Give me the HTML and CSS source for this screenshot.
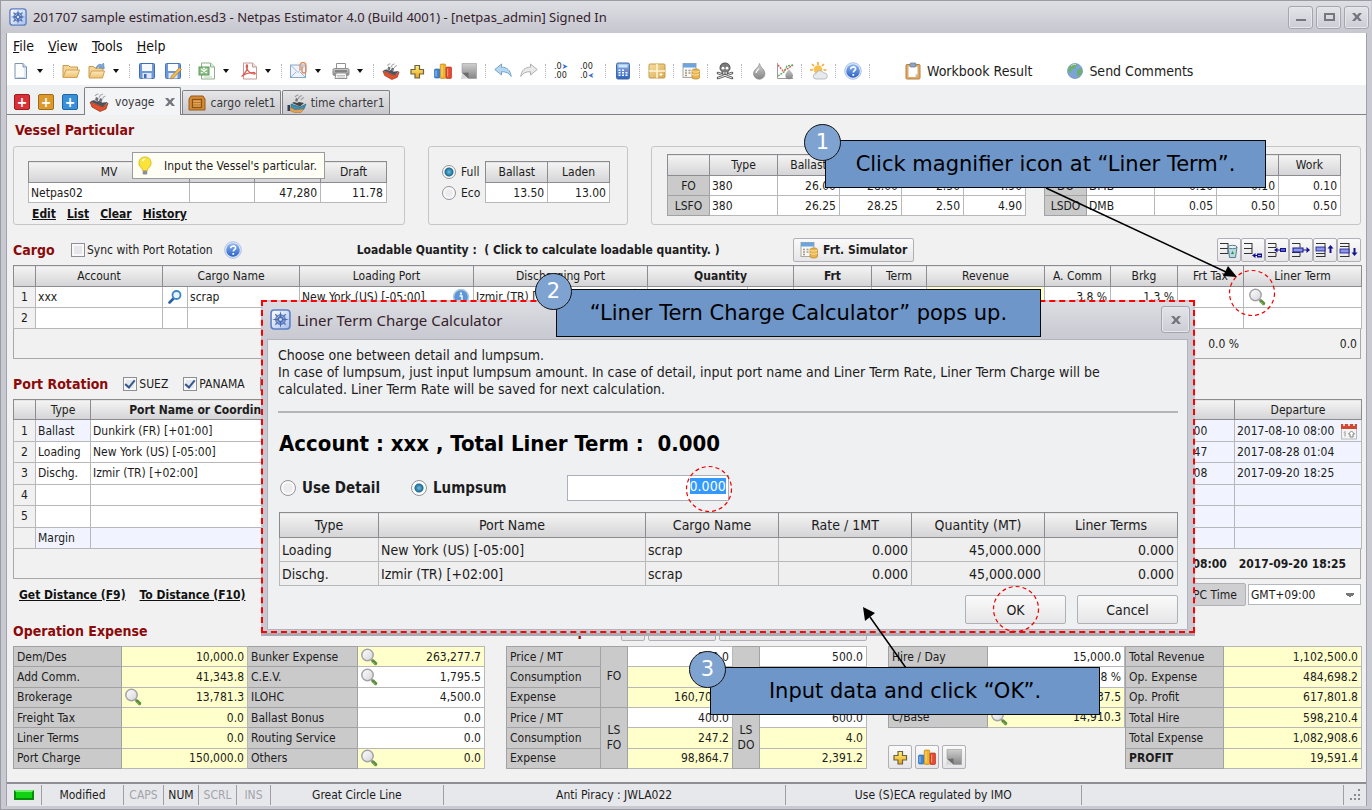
FILE: index.html
```html
<!DOCTYPE html>
<html lang="en">
<head>
    <meta charset="UTF-8">
    <meta name="viewport" content="width=device-width, initial-scale=1.0">
    <title>201707 sample estimation.esd3 - Netpas Estimator 4.0</title>
    <link rel="stylesheet" href="styles.css">
</head>
<body>
    <!-- icon sprite -->
    <svg class="sprite" xmlns="http://www.w3.org/2000/svg">
        <defs>
            <linearGradient id="gBlue" x1="0" y1="0" x2="0" y2="1"><stop offset="0" stop-color="#8fb8f0"/><stop offset="1" stop-color="#2a62c4"/></linearGradient>
            <linearGradient id="gGlass" x1="0" y1="0" x2="1" y2="1"><stop offset="0" stop-color="#ffffff"/><stop offset="1" stop-color="#d4d4d8"/></linearGradient>
            <linearGradient id="gGold" x1="0" y1="0" x2="0" y2="1"><stop offset="0" stop-color="#fff27a"/><stop offset="1" stop-color="#e8a21a"/></linearGradient>
            <linearGradient id="gFolder" x1="0" y1="0" x2="0" y2="1"><stop offset="0" stop-color="#fde9bf"/><stop offset="1" stop-color="#eec06e"/></linearGradient>
            <linearGradient id="gGrey" x1="0" y1="0" x2="0" y2="1"><stop offset="0" stop-color="#cfcfcf"/><stop offset="1" stop-color="#858585"/></linearGradient>
            <linearGradient id="gTan" x1="0" y1="0" x2="1" y2="1"><stop offset="0" stop-color="#f7dfa6"/><stop offset="1" stop-color="#d9a94e"/></linearGradient>
            <linearGradient id="gApp" x1="0" y1="0" x2="1" y2="1"><stop offset="0" stop-color="#ffffff"/><stop offset="1" stop-color="#a9c0ec"/></linearGradient>
        </defs>
        <symbol id="i-app" viewBox="0 0 20 20">
            <rect x="1" y="1" width="18" height="18" rx="3" fill="url(#gApp)" stroke="#5c7fc4" stroke-width="1.500"/>
            <circle cx="10" cy="10" r="4.500" fill="none" stroke="#5878b8" stroke-width="1.200"/>
            <path d="M10 2l1.500 6.500L18 10l-6.500 1.500L10 18l-1.500-6.500L2 10l6.500-1.500z" fill="#4a6cb0"/>
            <path d="M5 5l10 10M15 5L5 15" stroke="#5878b8" stroke-width="1.300"/>
            <circle cx="10" cy="10" r="1.300" fill="#dbe6fa"/>
        </symbol>
        <symbol id="i-new" viewBox="0 0 18 18">
            <path d="M3 1.500h8l3.500 3.500v11.500H3z" fill="#fbfdff" stroke="#7d93b4"/><path d="M11 1.500V5h3.500" fill="#d4e0f2" stroke="#7d93b4"/><path d="M13 6v9.500H4.500" fill="none" stroke="#c3d5ee"/>
        </symbol>
        <symbol id="i-open" viewBox="0 0 18 18">
            <path d="M1 15V3.500h5.500L8 5h7.500v3" fill="#f5d596" stroke="#c99a4a"/><path d="M1 15.500L4 8h13.500L15 15.500z" fill="url(#gFolder)" stroke="#cf9f52"/>
        </symbol>
        <symbol id="i-openfrom" viewBox="0 0 18 18">
            <path d="M1 15V4.500h4.500L7 6h8v3" fill="#f5d596" stroke="#c99a4a"/><path d="M1 16L3.500 9h13L14.500 16z" fill="url(#gFolder)" stroke="#cf9f52"/>
            <path d="M8 6.500C9 2.500 12 1.500 14 3l1.500-2 .8 5.500-5.300-.6L12.500 4.500C11 4 9.500 5 8 6.500z" fill="#7fa9d6" stroke="#4e7fb5" stroke-width=".6"/>
        </symbol>
        <symbol id="i-save" viewBox="0 0 18 18">
            <rect x="1.500" y="1.500" width="15" height="15" rx="1" fill="#6d99dc" stroke="#3f6db5"/><rect x="4" y="2" width="10" height="7" fill="#f5f9ff"/><rect x="4.500" y="11" width="9" height="5.500" fill="#dfe8f6"/><rect x="6" y="12" width="2.500" height="4" fill="#3f6db5"/>
        </symbol>
        <symbol id="i-saveas" viewBox="0 0 18 18">
            <rect x="1.500" y="1.500" width="15" height="15" rx="1" fill="#6d99dc" stroke="#4d76b8"/><rect x="4" y="2" width="10" height="7" fill="#fbfcff"/><rect x="4.500" y="11" width="9" height="5.500" fill="#dfe8f6"/><path d="M15.500 5.500l2 2-8 8.500-3 1 1-3z" fill="#f0bb55" stroke="#a87a28" stroke-width=".7"/>
        </symbol>
        <symbol id="i-xls" viewBox="0 0 18 18">
            <path d="M3.500 1h9l4 4v12h-13z" fill="#fff" stroke="#8fae8c"/><path d="M12.500 1v4h4" fill="#dcebd9" stroke="#8fae8c"/><rect x="1" y="5" width="10" height="8" fill="#8cc086" stroke="#5c9c58"/><path d="M3 7l6 4M9 7l-6 4M5 6.500h2" stroke="#fff" stroke-width="1.300"/><path d="M6 15h8" stroke="#b9d4b5"/>
        </symbol>
        <symbol id="i-pdf" viewBox="0 0 18 18">
            <path d="M3.500 1h9l4 4v12h-13z" fill="#fff" stroke="#c49a9a"/><path d="M12.500 1v4h4" fill="#f3dcdc" stroke="#c49a9a"/><path d="M1.500 14.500C5 12 8 7 7.500 3.500 7.300 2 5.800 3 6.500 5.500 7.500 9 10 11.500 14 12c2 .3 1.500-1.800-1.500-1.500C9 10.800 4 12.500 1.500 14.500z" fill="none" stroke="#dd5a50" stroke-width="1.200"/>
        </symbol>
        <symbol id="i-mail" viewBox="0 0 18 18">
            <rect x=".5" y="3" width="15" height="12.500" fill="#eef4fb" stroke="#8aa6c4"/><path d="M1 3.500l7 7 7-7M1 15l5-5M15 15l-5-5" fill="none" stroke="#9fb8d2"/><path d="M10 8V3.500a3 3 0 0 1 6 0V9a2 2 0 0 1-4 0V4" fill="none" stroke="#e08a5a" stroke-width="1.300"/>
        </symbol>
        <symbol id="i-print" viewBox="0 0 18 18">
            <path d="M4.500 1.500h9V7h-9z" fill="#fff" stroke="#909090"/><rect x="1" y="6.500" width="16" height="7" rx="1.500" fill="url(#gGrey)" stroke="#8d8d8d"/><path d="M4 11h10l1 5.500H3z" fill="#fafafa" stroke="#909090"/><path d="M5 13.500h8M5 15h8" stroke="#b4b4b4" stroke-width=".8"/><path d="M3 9h12" stroke="#555"/>
        </symbol>
        <symbol id="i-voyage" viewBox="0 0 20 20">
            <path d="M1 10l13 5 5-4-2 6-6 2.500L3 15z" fill="#e2512c" stroke="#8f2c14" stroke-width=".7"/><path d="M2 9.500l3-1 3 1.500 2.500-1L13 11l5-.5-4 4z" fill="#50545c" stroke="#34363c" stroke-width=".6"/><path d="M6 8l1-3 2.500 1-.8 3.500zM10 9l1-3 2.500 1-.8 3z" fill="#6c7078"/><path d="M6 4c1-1.500 2-2 3.500-2M10 5.500c1-2.500 2-3 4-3.500M13.500 6.500c.8-1.500 1.500-2 3-2.500" fill="none" stroke="#a8a8a8" stroke-width="1.200"/>
        </symbol>
        <symbol id="i-plus" viewBox="0 0 18 18">
            <path d="M7 3.500h4.500v4h4V12h-4v4H7v-4H3V7.500h4z" fill="url(#gGold)" stroke="#6d6242" stroke-width="1.200"/>
        </symbol>
        <symbol id="i-bars" viewBox="0 0 18 18">
            <rect x=".5" y="7" width="5.500" height="9" rx="1" fill="#3f87d6" stroke="#1d5ea8" stroke-width=".6"/><rect x="6.200" y="2" width="5.500" height="14.500" rx="1" fill="#f0b226" stroke="#b87c10" stroke-width=".6"/><rect x="12" y="5" width="5.500" height="11.500" rx="1" fill="#e5482e" stroke="#a52a16" stroke-width=".6"/><path d="M2 8.500v6M8 3.500v11M13.700 6.500v8" stroke="#fff" stroke-opacity=".5"/>
        </symbol>
        <symbol id="i-note" viewBox="0 0 18 18">
            <path d="M2 1.500h14.500v15H8.500L2 11z" fill="url(#gGrey)" stroke="#999" stroke-width=".6"/><path d="M2 11l6.500 5.500V10.500z" fill="#6d6d6d"/><path d="M1 17l7-.5L2 11z" fill="#d6d6d6"/>
        </symbol>
        <symbol id="i-undo" viewBox="0 0 18 18">
            <path d="M.8 7.500L7.500 2v3.200c5.500 0 9 3 9.700 9.300-2.200-3.500-5-4.800-9.700-4.800V13z" fill="#b7d7f0" stroke="#6b9cc6" stroke-width=".9"/>
        </symbol>
        <symbol id="i-redo" viewBox="0 0 18 18">
            <path d="M17.200 7.500L10.500 2v3.200C5 5.200 1.500 8.200.8 14.500 3 11 5.800 9.700 10.500 9.700V13z" fill="#e9e9e9" stroke="#a8a8a8" stroke-width=".9"/>
        </symbol>
        <symbol id="i-calc" viewBox="0 0 18 18">
            <rect x="2.500" y="1" width="13" height="16" rx="1.500" fill="url(#gBlue)" stroke="#47699f"/><rect x="4.500" y="2.500" width="9" height="3" fill="#cfe3fa"/><g fill="#fff"><path d="M4.500 7.500h2v1.500h-2zM8 7.500h2v1.500H8zM4.500 10h2v1.500h-2zM8 10h2v1.500H8zM4.500 12.500h2V14h-2zM8 12.500h2V14H8zM11.500 10h2v1.500h-2zM11.500 12.500h2V14h-2z"/></g><path d="M11.500 7.500h2v1.500h-2z" fill="#e86a5a"/>
        </symbol>
        <symbol id="i-grid" viewBox="0 0 18 18">
            <rect x="1" y="2" width="16" height="14" rx="1" fill="url(#gTan)" stroke="#c39a4c"/><path d="M9 2v14M1 9h16" stroke="#fff5d8" stroke-width="1.500"/><path d="M13 11v3M11.500 12.500h3" stroke="#fff"/>
        </symbol>
        <symbol id="i-sim" viewBox="0 0 18 18">
            <rect x="1" y="1.500" width="13" height="14" fill="#f7f7f4" stroke="#a9a9a0"/><rect x="1" y="1.500" width="13" height="4" fill="#6ba4df"/><path d="M3 8.500h2M6.500 8.500h2M3 11h2M6.500 11h2M3 13.500h2" stroke="#a7988a" stroke-width="1.500"/><path d="M10 8.500c0-2 7.500-2 7.500 0v7c0 2-7.500 2-7.500 0z" fill="#e9b44a" stroke="#b6802a" stroke-width=".7"/><path d="M10 9c1 1.500 6.500 1.500 7.500 0M10 12c1 1.500 6.500 1.500 7.500 0" fill="none" stroke="#fbe3a6"/>
        </symbol>
        <symbol id="i-skull" viewBox="0 0 18 18">
            <path d="M2 11l14 5M16 11l-14 5" stroke="#5c5c5c" stroke-width="2.600" stroke-linecap="round"/><path d="M2 11l14 5M16 11l-14 5" stroke="#e4e4e4" stroke-width="1"/><path d="M9 1c3.500 0 5 2.300 5 5 0 2-1 2.800-2 3.300V12H6V9.300C5 8.800 4 8 4 6c0-2.700 1.500-5 5-5z" fill="#7a7a7a" stroke="#555"/><circle cx="7" cy="6.200" r="1.400" fill="#fff"/><circle cx="11" cy="6.200" r="1.400" fill="#fff"/><path d="M7.500 10v2M9 10v2M10.500 10v2" stroke="#ddd" stroke-width=".8"/>
        </symbol>
        <symbol id="i-drop" viewBox="0 0 18 18">
            <path d="M9.500 1.500c.5 4 5.500 6 5.500 10a5.500 5.500 0 0 1-11.500 0C3.500 7.500 8.500 6 9.500 1.500z" fill="url(#gGrey)" stroke="#8c8c8c" stroke-width=".7"/><path d="M6 11c0-2 2-3 3-4.500" fill="none" stroke="#fff" stroke-width="1.200"/>
        </symbol>
        <symbol id="i-trend" viewBox="0 0 18 18">
            <path d="M1.500 1v15.500H17" fill="none" stroke="#9c9c9c"/><path d="M2 3l5 6 4-2 6-4" fill="none" stroke="#dd5a4c" stroke-width="1.400" stroke-dasharray="2 1"/><path d="M2 14l6-4 3-6 6-1" fill="none" stroke="#5fae62" stroke-width="1.400" stroke-dasharray="2 1"/><path d="M13 6.500c.5 2.500 4 4 4 7a3.800 3.800 0 0 1-7.600 0C9.400 10.500 12.500 9 13 6.500z" fill="url(#gGrey)"/>
        </symbol>
        <symbol id="i-sun" viewBox="0 0 18 18">
            <path d="M8 0v3M2 2l2 2M14 2l-2 2M0 8h3M16.500 8h-3" stroke="#f0a83c" stroke-width="1.600"/><circle cx="8" cy="7.500" r="4.300" fill="#f8c04c"/><path d="M6 17a2.700 2.700 0 0 1 0-5.400 4 4 0 0 1 7.500-.6 3 3 0 0 1 1.500 6z" fill="#e8ebee" stroke="#a9aeb4" stroke-width=".8"/>
        </symbol>
        <symbol id="i-help" viewBox="0 0 18 18">
            <circle cx="9" cy="9" r="8.300" fill="#dfe9fa" stroke="#9db4dc" stroke-width=".8"/><circle cx="9" cy="9" r="6.800" fill="url(#gBlue)"/><path d="M6.700 7.200c0-3 4.900-3 4.900-.2 0 1.700-2.300 1.800-2.300 3.600" fill="none" stroke="#fff" stroke-width="1.600"/><rect x="8.400" y="12" width="1.800" height="1.800" fill="#fff"/>
        </symbol>
        <symbol id="i-info" viewBox="0 0 18 18">
            <circle cx="9" cy="9" r="7.500" fill="#5b96d6" stroke="#b4c8dc" stroke-width="1.500"/><rect x="8" y="4.500" width="2" height="2" fill="#fff"/><path d="M7.500 8H10v5M7 13.200h4.500" fill="none" stroke="#fff" stroke-width="1.400"/>
        </symbol>
        <symbol id="i-clip" viewBox="0 0 18 18">
            <rect x="2" y="2.500" width="14" height="14.500" rx="1" fill="#e0a968" stroke="#b8803f"/><path d="M4.500 4.500h9V12l-2 3h-7z" fill="#fcfdff"/><path d="M13.500 12h-2v3z" fill="#c6cfde"/><rect x="6" y="1" width="6" height="4" rx="1" fill="#8ea4c4" stroke="#66799a" stroke-width=".7"/>
        </symbol>
        <symbol id="i-globe" viewBox="0 0 18 18">
            <circle cx="9" cy="9" r="7.500" fill="#7ba5d6" stroke="#7c94b8" stroke-width=".8"/><path d="M4 3.500C7 1.500 10 2 11 3L9.500 6 6 7.500 4.500 11 2 8.500zM11 8l4.500-1.500.8 3.500-3 4.500-2.300-1z" fill="#6eb070"/><path d="M5 4c1.500-1.500 3-1.800 5-1.500" stroke="#fff" stroke-opacity=".6" fill="none"/>
        </symbol>
        <symbol id="i-lens" viewBox="0 0 18 18">
            <path d="M13 13l2.500 2.500" stroke="#5a8f38" stroke-width="3.400" stroke-linecap="round"/><path d="M12.500 14l2.500 2.500" stroke="#a3cf7c" stroke-width="1"/><path d="M11 11l2 2" stroke="#7a7a7a" stroke-width="1.500"/><circle cx="7.500" cy="7" r="5.700" fill="url(#gGlass)" stroke="#a4a4a8" stroke-width="1.500"/>
        </symbol>
        <symbol id="i-find" viewBox="0 0 18 18">
            <path d="M8 10L3.500 14.500" stroke="#2a5da8" stroke-width="2.600" stroke-linecap="round"/><circle cx="10.500" cy="7" r="4" fill="#eaf4fd" stroke="#3c85c8" stroke-width="1.800"/>
        </symbol>
        <symbol id="i-crate" viewBox="0 0 20 20">
            <path d="M4 3h12l2 3v11H2V6z" fill="#d68b32" stroke="#94581a"/><rect x="5.500" y="6.500" width="9" height="8" fill="#e2a355" stroke="#8c5216" stroke-width="1.300"/><path d="M6 9.500h8M6 12h8" stroke="#b87428"/>
        </symbol>
        <symbol id="i-charter" viewBox="0 0 20 20">
            <path d="M4 11l9 3 6-3-2 5-6 2.500-7-2z" fill="#3a8fb0" stroke="#275f78" stroke-width=".6"/><path d="M3 14l5 3 9-1-3 3.500-6 .2-5-2z" fill="#e5a258" stroke="#a8692a" stroke-width=".5"/><path d="M5 10l2-1 3 1 2-1 5 1-4 3.500z" fill="#444"/><path d="M8 8l1-3 2 .8-.6 3z" fill="#6c7078"/><path d="M8 4c1-1.500 2-2 3.500-2M11 6c1-2.500 2-3 4-3.500M14 7c.8-1.500 1.500-2 3-2.500" fill="none" stroke="#999" stroke-width="1.200"/><rect x=".5" y="12" width="2.500" height="6" fill="#2e3f5e"/>
        </symbol>
        <symbol id="i-bulb" viewBox="0 0 18 20">
            <path d="M9 1a6 6 0 0 1 3.500 11c-.8.700-1 1.500-1 2.500h-5c0-1-.2-1.800-1-2.500A6 6 0 0 1 9 1z" fill="#fae43c" stroke="#d4b21e" stroke-width=".8"/><path d="M6.500 5c.5-1.500 1.500-2 2.500-2" fill="none" stroke="#fff" stroke-width="1.500"/><rect x="6.700" y="14.800" width="4.600" height="3.700" rx="1" fill="#8b8f96"/>
        </symbol>
        <symbol id="i-calendar" viewBox="0 0 18 18">
            <rect x="1.500" y="3" width="15" height="14" fill="#f3f3f3" stroke="#b8b8b8"/><rect x="1" y="2" width="16" height="5" fill="#cf4a34"/><path d="M4 1v3M9 1v3M14 1v3" stroke="#fff" stroke-width="1.500"/><path d="M5 9.500v5M4 10.500l1-1" fill="none" stroke="#999"/><path d="M11.500 9l3 3h-1.500v3h-3v-3H8.500z" fill="#fff" stroke="#777" stroke-width=".9"/>
        </symbol>
        <symbol id="i-rowdel" viewBox="0 0 20 18">
            <path d="M1 2.500h8M1 7.500h8M1 12.500h8M9 2v11" stroke="#333" fill="none"/><path d="M9 6h9l-1.500 10.500h-6z" fill="#b9d8e2" stroke="#587e90"/><ellipse cx="13.500" cy="6" rx="4.500" ry="1.700" fill="#e9f4f7" stroke="#587e90"/><path d="M12 13l1.500-3 1.500 3z" fill="#189a3c"/>
        </symbol>
        <symbol id="i-rowadd" viewBox="0 0 20 18">
            <path d="M1 2.500h8M1 7.500h8M1 12.500h8M9 2v11" stroke="#333" fill="none"/><path d="M9 14.500l3.500-2.500v2H14v-1.500h5v4h-5V15h-1.500v2z" fill="#14148c"/><path d="M15 14h3v1h-3z" fill="#aab0ec"/>
        </symbol>
        <symbol id="i-rowins" viewBox="0 0 20 18">
            <path d="M1 2.500h8v4M1 6.500h8M1 11.500h8v4M1 15.500h8" stroke="#333" fill="none"/><path d="M7 9l3.500-2.500v2H13V7h6v4h-6V9.500h-2.500v2z" fill="#14148c"/><path d="M14 8.500h4v1h-4z" fill="#aab0ec"/>
        </symbol>
        <symbol id="i-rowout" viewBox="0 0 20 18">
            <path d="M1 2.500h8v4M1 11.500h8v4M1 15.500h8" stroke="#333" fill="none"/><rect x="2" y="7" width="10" height="4" fill="#8c96ea" stroke="#14148c"/><path d="M19 9l-3.500-3v2.500H12v1h3.500V12z" fill="#14148c"/>
        </symbol>
        <symbol id="i-rowup" viewBox="0 0 20 18">
            <path d="M1 2.500h9M1 15.500h9M10 2v14M1 12.500h9" stroke="#333" fill="none"/><rect x="1" y="6" width="9" height="4" fill="#8c96ea" stroke="#14148c" stroke-width=".8"/><path d="M15.500 4l3 3.500h-2V12h-2V7.500h-2z" fill="#14148c"/>
        </symbol>
        <symbol id="i-rowdown" viewBox="0 0 20 18">
            <path d="M1 2.500h9M1 15.500h9M10 2v14M1 5.500h9" stroke="#333" fill="none"/><rect x="1" y="8" width="9" height="4" fill="#8c96ea" stroke="#14148c" stroke-width=".8"/><path d="M15.500 15l3-3.500h-2V7h-2v4.500h-2z" fill="#14148c"/>
        </symbol>
        <symbol id="i-close" viewBox="0 0 12 12"><path d="M1 2h3l2 2.300L8 2h3L7.700 6 11 10H8L6 7.700 4 10H1l3.300-4z" fill="#767680"/></symbol>
    </svg>

    <div class="window">
        <header class="titlebar">
            <svg class="app-icon"><use href="#i-app"/></svg>
            <h1>201707 sample estimation.esd3 - Netpas Estimator 4.0 (Build 4001) - [netpas_admin] Signed In</h1>
            <div class="window-buttons">
                <button type="button" aria-label="Minimize"><svg viewBox="0 0 12 12"><path d="M1 8h10v2H1z" fill="#767680"/></svg></button>
                <button type="button" aria-label="Maximize"><svg viewBox="0 0 12 12"><path d="M2 3h9v6H2z" fill="none" stroke="#767680" stroke-width="2"/></svg></button>
                <button type="button" aria-label="Close"><svg><use href="#i-close"/></svg></button>
            </div>
        </header>

        <div class="client">
            <nav class="menubar">
                <a href="#"><u>F</u>ile</a>
                <a href="#"><u>V</u>iew</a>
                <a href="#"><u>T</u>ools</a>
                <a href="#"><u>H</u>elp</a>
            </nav>

            <div class="toolbar">
                <button type="button" class="tool" aria-label="New"><svg><use href="#i-new"/></svg></button>
                <button type="button" class="drop" aria-label="New options"></button>
                <span class="sep"></span>
                <button type="button" class="tool" aria-label="Open"><svg><use href="#i-open"/></svg></button>
                <button type="button" class="tool" aria-label="Open from"><svg><use href="#i-openfrom"/></svg></button>
                <button type="button" class="drop" aria-label="Open options"></button>
                <span class="sep"></span>
                <button type="button" class="tool" aria-label="Save"><svg><use href="#i-save"/></svg></button>
                <button type="button" class="tool" aria-label="Save as"><svg><use href="#i-saveas"/></svg></button>
                <span class="sep"></span>
                <button type="button" class="tool" aria-label="Excel"><svg><use href="#i-xls"/></svg></button>
                <button type="button" class="drop" aria-label="Excel options"></button>
                <button type="button" class="tool" aria-label="PDF"><svg><use href="#i-pdf"/></svg></button>
                <button type="button" class="drop" aria-label="PDF options"></button>
                <span class="sep"></span>
                <button type="button" class="tool" aria-label="Mail"><svg><use href="#i-mail"/></svg></button>
                <button type="button" class="drop" aria-label="Mail options"></button>
                <button type="button" class="tool" aria-label="Print"><svg><use href="#i-print"/></svg></button>
                <button type="button" class="drop" aria-label="Print options"></button>
                <span class="sep"></span>
                <button type="button" class="tool" aria-label="Voyage"><svg><use href="#i-voyage"/></svg></button>
                <button type="button" class="tool" aria-label="Add"><svg><use href="#i-plus"/></svg></button>
                <button type="button" class="tool" aria-label="Chart"><svg><use href="#i-bars"/></svg></button>
                <button type="button" class="tool" aria-label="Note"><svg><use href="#i-note"/></svg></button>
                <span class="sep"></span>
                <button type="button" class="tool" aria-label="Undo"><svg><use href="#i-undo"/></svg></button>
                <button type="button" class="tool" aria-label="Redo"><svg><use href="#i-redo"/></svg></button>
                <span class="sep"></span>
                <button type="button" class="tool decimal" aria-label="Less decimals"><span>.0<i>&#10148;</i></span><span>.00</span></button>
                <button type="button" class="tool decimal" aria-label="More decimals"><span>.00</span><span>.0<i class="back">&#10148;</i></span></button>
                <span class="sep"></span>
                <button type="button" class="tool" aria-label="Calculator"><svg><use href="#i-calc"/></svg></button>
                <span class="sep"></span>
                <button type="button" class="tool" aria-label="Layout"><svg><use href="#i-grid"/></svg></button>
                <span class="sep"></span>
                <button type="button" class="tool" aria-label="Simulator"><svg><use href="#i-sim"/></svg></button>
                <span class="sep"></span>
                <button type="button" class="tool" aria-label="Piracy"><svg><use href="#i-skull"/></svg></button>
                <span class="sep"></span>
                <button type="button" class="tool" aria-label="Bunker"><svg><use href="#i-drop"/></svg></button>
                <button type="button" class="tool" aria-label="Bunker trend"><svg><use href="#i-trend"/></svg></button>
                <span class="sep"></span>
                <button type="button" class="tool" aria-label="Weather"><svg><use href="#i-sun"/></svg></button>
                <span class="sep"></span>
                <button type="button" class="tool" aria-label="Help"><svg><use href="#i-help"/></svg></button>
                <span class="sep"></span>
                <button type="button" class="tool-text"><svg><use href="#i-clip"/></svg>Workbook Result</button>
                <button type="button" class="tool-text"><svg><use href="#i-globe"/></svg>Send Comments</button>
            </div>

            <div class="tabs">
                <button type="button" class="add add-red" aria-label="Add voyage">+</button>
                <button type="button" class="add add-gold" aria-label="Add cargo relet">+</button>
                <button type="button" class="add add-blue" aria-label="Add time charter">+</button>
                <button type="button" class="tab active"><svg><use href="#i-voyage"/></svg>voyage<svg class="tab-close"><use href="#i-close"/></svg></button>
                <button type="button" class="tab"><svg><use href="#i-crate"/></svg>cargo relet1</button>
                <button type="button" class="tab"><svg><use href="#i-charter"/></svg>time charter1</button>
            </div>

            <main class="content">
                <h2 class="vessel-title">Vessel Particular</h2>
                <div class="panels">
                    <section class="panel panel-vessel">
                        <table class="grid vessel">
                            <colgroup><col><col><col><col></colgroup>
                            <tr><th>MV</th><th>Type</th><th>DWT</th><th>Draft</th></tr>
                            <tr><td>Netpas02</td><td></td><td class="num">47,280</td><td class="num">11.78</td></tr>
                        </table>
                        <div class="links">
                            <a href="#">Edit</a><a href="#">List</a><a href="#">Clear</a><a href="#">History</a>
                        </div>
                        <div class="tip"><svg><use href="#i-bulb"/></svg>Input the Vessel's particular.</div>
                    </section>
                    <section class="panel panel-speed">
                        <div class="speed-mode">
                            <label><input type="radio" name="speed" checked>Full</label>
                            <label><input type="radio" name="speed">Eco</label>
                        </div>
                        <table class="grid">
                            <tr><th>Ballast</th><th>Laden</th></tr>
                            <tr><td class="num">13.50</td><td class="num">13.00</td></tr>
                        </table>
                    </section>
                    <section class="panel panel-fuel">
                        <table class="grid fuel fuel-a">
                            <colgroup><col><col><col><col><col><col></colgroup>
                            <tr><th></th><th>Type</th><th>Ballast</th><th>Laden</th><th>Idle</th><th>Work</th></tr>
                            <tr><td class="lab">FO</td><td>380</td><td class="num">26.00</td><td class="num">28.00</td><td class="num">2.50</td><td class="num">4.90</td></tr>
                            <tr><td class="lab">LSFO</td><td>380</td><td class="num">26.25</td><td class="num">28.25</td><td class="num">2.50</td><td class="num">4.90</td></tr>
                        </table>
                        <table class="grid fuel fuel-b">
                            <colgroup><col><col><col><col><col></colgroup>
                            <tr><th></th><th>Type</th><th>Sea</th><th>Idle</th><th>Work</th></tr>
                            <tr><td class="lab">DO</td><td>DMB</td><td class="num">0.10</td><td class="num">0.10</td><td class="num">0.10</td></tr>
                            <tr><td class="lab">LSDO</td><td>DMB</td><td class="num">0.05</td><td class="num">0.50</td><td class="num">0.50</td></tr>
                        </table>
                    </section>
                </div>

                <div class="section-head cargo-head">
                    <h2>Cargo</h2>
                    <label class="check"><input type="checkbox">Sync with Port Rotation</label>
                    <button type="button" class="plain" aria-label="Help"><svg><use href="#i-help"/></svg></button>
                    <strong>Loadable Quantity : &nbsp;( Click to calculate loadable quantity. )</strong>
                    <button type="button" class="push simulator"><svg><use href="#i-sim"/></svg>Frt. Simulator</button>
                    <div class="row-tools">
                        <button type="button" class="push" aria-label="Delete row"><svg><use href="#i-rowdel"/></svg></button>
                        <button type="button" class="push" aria-label="Add row"><svg><use href="#i-rowadd"/></svg></button>
                        <button type="button" class="push" aria-label="Insert row"><svg><use href="#i-rowins"/></svg></button>
                        <button type="button" class="push" aria-label="Copy row"><svg><use href="#i-rowout"/></svg></button>
                        <button type="button" class="push" aria-label="Move up"><svg><use href="#i-rowup"/></svg></button>
                        <button type="button" class="push" aria-label="Move down"><svg><use href="#i-rowdown"/></svg></button>
                    </div>
                </div>
                <table class="grid cargo">
                    <colgroup><col><col><col><col><col><col><col><col><col><col><col><col><col><col><col></colgroup>
                    <tr><th></th><th>Account</th><th colspan="2">Cargo Name</th><th>Loading Port</th><th>Discharging Port</th><th colspan="2" class="strong">Quantity</th><th class="strong">Frt</th><th>Term</th><th>Revenue</th><th>A. Comm</th><th>Brkg</th><th>Frt Tax</th><th>Liner Term</th></tr>
                    <tr>
                        <td class="idx">1</td><td>xxx</td>
                        <td class="icon-cell"><button type="button" class="plain" aria-label="Find cargo"><svg><use href="#i-find"/></svg></button></td>
                        <td>scrap</td>
                        <td><div class="with-icon">New York (US) [-05:00]<svg><use href="#i-info"/></svg></div></td>
                        <td><div class="with-icon">Izmir (TR) [+02:00]<svg><use href="#i-info"/></svg></div></td>
                        <td class="num">45,000</td><td>MT</td><td class="num">24.50</td><td>FIOST</td><td class="num calc">1,102,500.0</td>
                        <td class="num">3.8 %</td><td class="num">1.3 %</td><td></td>
                        <td><button type="button" class="plain lens" aria-label="Liner term"><svg><use href="#i-lens"/></svg></button></td>
                    </tr>
                    <tr><td class="idx">2</td><td></td><td></td><td></td><td></td><td></td><td></td><td></td><td></td><td></td><td class="calc"></td><td></td><td></td><td></td><td></td></tr>
                </table>
                <div class="grid-foot cargo-foot"><span>0.0 %</span><span class="foot-liner">0.0</span></div>

                <div class="section-head rotation-head">
                    <h2>Port Rotation</h2>
                    <label class="check"><input type="checkbox" checked>SUEZ</label>
                    <label class="check"><input type="checkbox" checked>PANAMA</label>
                    <label class="check"><input type="checkbox">KIEL</label>
                </div>
                <table class="grid rotation">
                    <colgroup><col><col><col><col><col><col></colgroup>
                    <tr><th></th><th>Type</th><th class="strong">Port Name or Coordinate</th><th></th><th>Arrival</th><th>Departure</th></tr>
                    <tr><td class="idx">1</td><td class="auto">Ballast</td><td>Dunkirk (FR) [+01:00]</td><td></td><td class="auto">2017-08-10 08:00</td><td class="auto"><div class="with-icon">2017-08-10 08:00<svg><use href="#i-calendar"/></svg></div></td></tr>
                    <tr><td class="idx">2</td><td>Loading</td><td>New York (US) [-05:00]</td><td></td><td class="auto">2017-08-23 22:47</td><td class="auto">2017-08-28 01:04</td></tr>
                    <tr><td class="idx">3</td><td>Dischg.</td><td>Izmir (TR) [+02:00]</td><td></td><td class="auto">2017-09-14 07:08</td><td class="auto">2017-09-20 18:25</td></tr>
                    <tr><td class="idx">4</td><td></td><td></td><td></td><td class="auto"></td><td class="auto"></td></tr>
                    <tr><td class="idx">5</td><td></td><td></td><td></td><td class="auto"></td><td class="auto"></td></tr>
                    <tr><td class="idx"></td><td class="auto">Margin</td><td class="auto"></td><td class="auto"></td><td class="auto"></td><td class="auto"></td></tr>
                </table>
                <div class="grid-foot rotation-foot"><strong>2017-08-10 08:00</strong><strong>2017-09-20 18:25</strong></div>

                <div class="distance-bar">
                    <a href="#">Get Distance (F9)</a>
                    <a href="#">To Distance (F10)</a>
                    <button type="button" class="push pc-time">PC Time</button>
                    <select aria-label="Time zone"><option>GMT+09:00</option></select>
                </div>

                <div class="results">
                    <section>
                        <div class="block-head"><h2>Operation Expense</h2></div>
                        <table class="grid sums opex">
                            <colgroup><col><col><col><col></colgroup>
                            <tr><td class="lab">Dem/Des</td><td class="num calc">10,000.0</td><td class="lab">Bunker Expense</td><td class="calc"><div class="lookup"><button type="button" class="plain" aria-label="Bunker expense detail"><svg><use href="#i-lens"/></svg></button>263,277.7</div></td></tr>
                            <tr><td class="lab">Add Comm.</td><td class="num calc">41,343.8</td><td class="lab">C.E.V.</td><td><div class="lookup"><button type="button" class="plain" aria-label="C.E.V. detail"><svg><use href="#i-lens"/></svg></button>1,795.5</div></td></tr>
                            <tr><td class="lab">Brokerage</td><td class="calc"><div class="lookup"><button type="button" class="plain" aria-label="Brokerage detail"><svg><use href="#i-lens"/></svg></button>13,781.3</div></td><td class="lab">ILOHC</td><td class="num">4,500.0</td></tr>
                            <tr><td class="lab">Freight Tax</td><td class="num calc">0.0</td><td class="lab">Ballast Bonus</td><td class="num">0.0</td></tr>
                            <tr><td class="lab">Liner Terms</td><td class="num calc">0.0</td><td class="lab">Routing Service</td><td class="num">0.0</td></tr>
                            <tr><td class="lab">Port Charge</td><td class="num calc">150,000.0</td><td class="lab">Others</td><td class="calc"><div class="lookup"><button type="button" class="plain" aria-label="Others detail"><svg><use href="#i-lens"/></svg></button>0.0</div></td></tr>
                        </table>
                    </section>
                    <section>
                        <div class="block-head">
                            <h2>Bunker Exp.</h2>
                            <button type="button" class="push" aria-label="Copy"></button>
                            <button type="button" class="push" aria-label="Bunker price"></button>
                            <button type="button" class="push" aria-label="Bunker plan"></button>
                        </div>
                        <table class="grid sums bunker">
                            <colgroup><col><col><col><col><col></colgroup>
                            <tr><td class="lab">Price / MT</td><td class="lab mid" rowspan="3">FO</td><td class="num">350.0</td><td class="lab mid" rowspan="3">DO</td><td class="num">500.0</td></tr>
                            <tr><td class="lab">Consumption</td><td class="num calc">459.2</td><td class="num calc">2.6</td></tr>
                            <tr><td class="lab">Expense</td><td class="num calc">160,708.8</td><td class="num calc">1,313.0</td></tr>
                            <tr><td class="lab">Price / MT</td><td class="lab mid" rowspan="3">LS<br>FO</td><td class="num">400.0</td><td class="lab mid" rowspan="3">LS<br>DO</td><td class="num">600.0</td></tr>
                            <tr><td class="lab">Consumption</td><td class="num calc">247.2</td><td class="num calc">4.0</td></tr>
                            <tr><td class="lab">Expense</td><td class="num calc">98,864.7</td><td class="num calc">2,391.2</td></tr>
                        </table>
                    </section>
                    <section>
                        <div class="block-head"><h2>Result</h2></div>
                        <div class="result-tables">
                            <div class="hire-col">
                                <table class="grid sums hire">
                                    <colgroup><col><col></colgroup>
                                    <tr><td class="lab">Hire / Day</td><td class="num">15,000.0</td></tr>
                                    <tr><td class="lab">Add Comm.</td><td class="num">3.8 %</td></tr>
                                    <tr><td class="lab">Net Hire</td><td class="num calc">14,437.5</td></tr>
                                    <tr><td class="lab">C/Base</td><td class="calc"><div class="lookup"><button type="button" class="plain" aria-label="C/Base detail"><svg><use href="#i-lens"/></svg></button>14,910.3</div></td></tr>
                                </table>
                                <div class="hire-tools">
                                    <button type="button" class="push" aria-label="Add"><svg><use href="#i-plus"/></svg></button>
                                    <button type="button" class="push" aria-label="Chart"><svg><use href="#i-bars"/></svg></button>
                                    <button type="button" class="push" aria-label="Note"><svg><use href="#i-note"/></svg></button>
                                </div>
                            </div>
                            <table class="grid sums totals">
                                <colgroup><col><col></colgroup>
                                <tr><td class="lab">Total Revenue</td><td class="num calc">1,102,500.0</td></tr>
                                <tr><td class="lab">Op. Expense</td><td class="num calc">484,698.2</td></tr>
                                <tr><td class="lab">Op. Profit</td><td class="num calc">617,801.8</td></tr>
                                <tr><td class="lab">Total Hire</td><td class="num calc">598,210.4</td></tr>
                                <tr><td class="lab">Total Expense</td><td class="num calc">1,082,908.6</td></tr>
                                <tr><td class="lab strong">PROFIT</td><td class="num calc">19,591.4</td></tr>
                            </table>
                        </div>
                    </section>
                </div>
            </main>

            <footer class="statusbar">
                <span><i class="led"></i></span>
                <span>Modified</span>
                <span class="off">CAPS</span>
                <span>NUM</span>
                <span class="off">SCRL</span>
                <span class="off">INS</span>
                <span>Great Circle Line</span>
                <span>Anti Piracy : JWLA022</span>
                <span>Use (S)ECA regulated by IMO</span>
                <span></span>
                <span><svg class="grip" viewBox="0 0 12 12"><path d="M9 0h2v2H9zM5 5h2v2H5zM9 5h2v2H9zM1 9h2v2H1zM5 9h2v2H5zM9 9h2v2H9z" fill="#8a8a90"/></svg></span>
            </footer>
        </div>
    </div>

    <!-- liner term popup -->
    <div class="dialog" role="dialog" aria-labelledby="dialogTitle">
        <div class="dialog-title">
            <svg class="app-icon"><use href="#i-app"/></svg>
            <h2 id="dialogTitle">Liner Term Charge Calculator</h2>
            <button type="button" aria-label="Close"><svg><use href="#i-close"/></svg></button>
        </div>
        <form class="dialog-body">
            <p>Choose one between detail and lumpsum.<br>In case of lumpsum, just input lumpsum amount. In case of detail, input port name and Liner Term Rate, Liner Term Charge will be<br>calculated. Liner Term Rate will be saved for next calculation.</p>
            <h3>Account : xxx , Total Liner Term : &nbsp;0.000</h3>
            <div class="mode">
                <label><input type="radio" name="mode">Use Detail</label>
                <label><input type="radio" name="mode" checked>Lumpsum</label>
                <input type="text" id="lumpsum" value="0.000" aria-label="Lumpsum amount">
            </div>
            <table class="grid charges">
                <colgroup><col><col><col><col><col><col></colgroup>
                <tr><th>Type</th><th>Port Name</th><th>Cargo Name</th><th>Rate / 1MT</th><th>Quantity (MT)</th><th>Liner Terms</th></tr>
                <tr><td>Loading</td><td>New York (US) [-05:00]</td><td>scrap</td><td class="num">0.000</td><td class="num">45,000.000</td><td class="num">0.000</td></tr>
                <tr><td>Dischg.</td><td>Izmir (TR) [+02:00]</td><td>scrap</td><td class="num">0.000</td><td class="num">45,000.000</td><td class="num">0.000</td></tr>
            </table>
            <div class="dialog-actions">
                <button type="button" class="push">OK</button>
                <button type="button" class="push">Cancel</button>
            </div>
        </form>
    </div>

    <!-- guide: rings, arrows and numbered steps -->
    <svg class="guide" width="1372" height="810" viewBox="0 0 1372 810" aria-hidden="true">
        <g fill="none" stroke="#f00000" stroke-width="1.200" stroke-dasharray="4 3">
            <circle cx="1252" cy="293" r="22.500"/>
            <circle cx="709" cy="489" r="22.500"/>
            <circle cx="1016" cy="609" r="22.500"/>
        </g>
        <path d="M1046 188L1226 272M906 668L870 617" stroke="#000" stroke-width="1.500"/>
        <path d="M1237 277L1223 276L1228 266zM863 607L875 613L865 621z" fill="#000"/>
    </svg>
    <div class="step step-1"><b>1</b>Click magnifier icon at “Liner Term”.</div>
    <div class="step step-2"><b>2</b>“Liner Tern Charge Calculator” pops up.</div>
    <div class="step step-3"><b>3</b>Input data and click “OK”.</div>

    <script>
        // start with the lumpsum amount selected
        document.getElementById('lumpsum').focus({ preventScroll: true });
        document.getElementById('lumpsum').select();
    </script>
</body>
</html>
```
FILE: styles.css
```css
* {
    box-sizing: border-box;
}

body {
    margin: 0;
    position: relative;
    font-family: "DejaVu Sans Condensed", "DejaVu Sans", Tahoma, sans-serif;
    font-size: 12px;
    line-height: 16px;
    color: #1c1c20;
    background: #c8c9d1;
}

h1, h2, h3, p {
    margin: 0;
    font-weight: normal;
}

button, input, select {
    font: inherit;
    color: inherit;
}

button {
    display: flex;
    align-items: center;
    justify-content: center;
    padding: 0;
    border: 0;
    background: none;
    white-space: nowrap;
}

a {
    color: #111;
}

svg {
    display: block;
    flex: none;
}

.sprite {
    position: absolute;
    width: 0;
    height: 0;
}

/* window frame */
.window {
    display: flex;
    flex-direction: column;
    min-height: 100vh;
    border: 1px solid #9a9ba3;
    border-right-color: #c8c9d1;
    padding: 0 4px 3px 5px;
    background: #c8c9d1;
}

.titlebar {
    display: flex;
    align-items: center;
    height: 32px;
    margin: 0 -4px 0 -5px;
    padding: 0 2px 0 8px;
    gap: 6px;
    background: linear-gradient(#dedfe4, #c6c7cf);
}

.titlebar h1 {
    flex: 1;
    font-family: "Noto Sans", sans-serif;
    font-size: 13px;
    color: #35222c;
    white-space: nowrap;
}

.app-icon {
    width: 18px;
    height: 18px;
}

.window-buttons {
    display: flex;
    gap: 3px;
}

.window-buttons button,
.dialog-title button {
    width: 25px;
    height: 23px;
    border: 1px solid #a4a5ae;
    border-radius: 3px;
    background: linear-gradient(#e3e4e9, #cccdd4);
    box-shadow: inset 0 0 0 1px #e6e7eb;
}

.window-buttons svg,
.dialog-title button svg {
    width: 12px;
    height: 12px;
}

.client {
    flex: 1;
    display: flex;
    flex-direction: column;
    background: #fff;
    border-left: 1px solid #a0a1ab;
    border-right: 1px solid #a0a1ab;
}

/* menu and toolbar */
.menubar {
    display: flex;
    gap: 14px;
    padding: 4px 6px 0;
    height: 24px;
    font-size: 14px;
    line-height: 18px;
}

.menubar a {
    text-decoration: none;
}

.toolbar {
    display: flex;
    align-items: center;
    gap: 8px;
    height: 28px;
    padding-left: 5px;
}

.tool {
    flex: none;
    width: 18px;
    height: 18px;
}

.tool svg,
.plain svg {
    width: 18px;
    height: 18px;
}

.tool.decimal {
    flex-direction: column;
    align-items: flex-start;
    font-size: 9px;
    line-height: 9px;
}

.decimal span {
    display: block;
}

.decimal i {
    display: inline-block;
    font-style: normal;
    font-size: 8px;
    color: #3b6fd0;
}

.decimal .back {
    transform: rotate(180deg);
}

.drop {
    flex: none;
    width: 12px;
    height: 18px;
    margin-left: -4px;
}

.drop::after {
    content: '';
    border: 3px solid transparent;
    border-top: 4px solid #111;
    border-bottom: 0;
}

.sep {
    flex: none;
    width: 2px;
    height: 14px;
    margin: 0 -1px;
    border-left: 1px dotted #b4b4b8;
}

.tool-text {
    gap: 5px;
    margin-left: 26px;
    font-size: 14px;
}

.tool-text svg {
    width: 18px;
    height: 18px;
}

/* document tabs */
.tabs {
    display: flex;
    align-items: flex-end;
    height: 30px;
    padding-left: 7px;
    background: #eff0f2;
    border-bottom: 1px solid #808084;
}

.add {
    width: 16px;
    height: 16px;
    margin: 0 8px 4px 0;
    border: 1px solid #a01a1a;
    border-radius: 2px;
    color: #fff;
    font-size: 14px;
    font-weight: bold;
}

.add-red {
    background: #d83038;
}

.add-gold {
    background: #dc9a2c;
    border-color: #a06a18;
}

.add-blue {
    background: #3a90d8;
    border-color: #1f64a4;
    margin-right: 6px;
}

.tab {
    height: 24px;
    margin-right: 1px;
    padding: 1px 4px 0;
    gap: 4px;
    border: 1px solid #808084;
    border-bottom: 0;
    border-radius: 2px 2px 0 0;
    background: linear-gradient(#e6e6e8, #c9c9cd);
    color: #38383c;
}

.tab.active {
    height: 28px;
    margin-bottom: -1px;
    padding: 0 4px;
    gap: 6px;
    background: #f3f4f5;
}

.tab svg {
    width: 20px;
    height: 20px;
}

.tab .tab-close {
    width: 12px;
    height: 12px;
    margin-left: 3px;
}

/* main sheet */
.content {
    flex: 1;
    padding: 0 5px 0 6px;
    background: #f1f1f2;
}

.content h2 {
    font-size: 14px;
    font-weight: bold;
    color: #8b0a0a;
    white-space: nowrap;
}

.content .vessel-title {
    height: 31px;
    line-height: 30px;
    padding-left: 2px;
}

.panels {
    display: grid;
    grid-template-columns: 391fr 203fr 708fr;
    gap: 23px;
}

.panel {
    position: relative;
    height: 79px;
    border: 1px solid #c6c6c8;
    border-radius: 3px;
}

.panel-vessel {
    padding: 14px 17px 0 14px;
}

.panel-speed {
    display: flex;
    align-items: flex-start;
    padding: 14px 17px 0 13px;
    gap: 5px;
}

.panel-speed .grid {
    flex: 1;
}

.speed-mode label {
    display: flex;
    align-items: center;
    gap: 5px;
    height: 21px;
}

.panel-fuel {
    display: grid;
    grid-template-columns: 360fr 296fr;
    gap: 18px;
    align-items: start;
    padding: 7px 19px 0 15px;
}

/* tables */
.grid {
    width: 100%;
    table-layout: fixed;
    border-collapse: collapse;
    background: #fff;
}

.grid th,
.grid td {
    height: 20px;
    padding: 0 2px;
    border: 1px solid #b8b8ba;
    overflow: hidden;
    line-height: 16px;
    white-space: nowrap;
    text-align: left;
}

.grid th {
    height: 21px;
    border-color: #8c8c90;
    background: linear-gradient(#f4f4f4, #d4d4d6);
    font-weight: normal;
    text-align: center;
}

.grid .num {
    padding-right: 3px;
    text-align: right;
}

.grid .strong {
    font-weight: bold;
}

.grid .lab {
    background: #cacaca;
    border-color: #a2a2a4;
}

.grid .calc {
    background: #ffffcc;
}

.grid .auto {
    background: #f1f4ff;
}

.grid .idx {
    padding: 0;
    background: #f1f1f2;
    text-align: center;
}

.vessel col:nth-child(1) { width: 161px; }
.vessel col:nth-child(2) { width: 65px; }
.vessel col:nth-child(3) { width: 66px; }
.vessel col:nth-child(4) { width: 66px; }

.fuel .lab {
    text-align: center;
}

.fuel col { width: 62px; }
.fuel col:nth-child(1) { width: 42px; }
.fuel col:nth-child(2) { width: 68px; }

.links {
    display: flex;
    gap: 11px;
    padding: 3px 4px 0;
    font-weight: bold;
}

.tip {
    position: absolute;
    top: 5px;
    left: 118px;
    display: flex;
    align-items: center;
    gap: 10px;
    width: 193px;
    height: 27px;
    padding-left: 3px;
    border: 1px solid #9a9aa0;
    background: #fffef4;
    white-space: nowrap;
}

.tip svg {
    width: 18px;
    height: 20px;
}

/* radios and tick boxes */
input[type="radio"] {
    appearance: none;
    flex: none;
    width: 14px;
    height: 14px;
    margin: 0;
    border: 1px solid #94949a;
    border-radius: 50%;
    background: #ececee;
    box-shadow: inset 0 0 0 2px #fafafa;
}

input[type="radio"]:checked {
    background: radial-gradient(circle, #6fc0e0 0, #1d6a94 4px, #fff 5px);
    box-shadow: none;
}

input[type="checkbox"] {
    appearance: none;
    display: grid;
    place-items: center;
    flex: none;
    width: 14px;
    height: 14px;
    margin: 0;
    border: 1px solid #8e8f96;
    background: #e6e7ea;
    box-shadow: inset 0 0 0 2px #f8f8f8;
}

input[type="checkbox"]:checked::after {
    content: '';
    width: 4px;
    height: 8px;
    margin-bottom: 3px;
    border: solid #34588c;
    border-width: 0 2px 2px 0;
    transform: rotate(40deg);
}

.check {
    display: flex;
    align-items: center;
    gap: 2px;
    white-space: nowrap;
}

.section-head {
    display: flex;
    align-items: center;
    height: 40px;
    padding-top: 10px;
}

.cargo-head h2 {
    width: 58px;
}

.cargo-head .plain {
    margin-left: 11px;
}

.cargo-head strong {
    margin-left: 115px;
    white-space: nowrap;
}

.push {
    height: 24px;
    border: 1px solid #b0b0b6;
    border-radius: 2px;
    background: linear-gradient(#fafafa, #e6e6e8);
}

.push svg {
    width: 20px;
    height: 18px;
}

.simulator {
    width: 121px;
    margin-left: 73px;
    gap: 4px;
    font-weight: bold;
}

.row-tools {
    display: flex;
    margin-left: auto;
}

.row-tools .push {
    width: 24px;
}

.cargo col:nth-child(1) { width: 22px; }
.cargo col:nth-child(2) { width: 127px; }
.cargo col:nth-child(3) { width: 25px; }
.cargo col:nth-child(4) { width: 112px; }
.cargo col:nth-child(5) { width: 174px; }
.cargo col:nth-child(6) { width: 174px; }
.cargo col:nth-child(7) { width: 100px; }
.cargo col:nth-child(8) { width: 46px; }
.cargo col:nth-child(9) { width: 78px; }
.cargo col:nth-child(10) { width: 55px; }
.cargo col:nth-child(11) { width: 118px; }
.cargo col:nth-child(12) { width: 66px; }
.cargo col:nth-child(13) { width: 67px; }
.cargo col:nth-child(14) { width: 66px; }
.cargo col:nth-child(15) { width: 118px; }

.cargo td {
    height: 21px;
}

.with-icon {
    display: flex;
    align-items: center;
    justify-content: space-between;
    height: 18px;
    padding-right: 1px;
}

.with-icon svg {
    width: 18px;
    height: 18px;
}

.icon-cell button {
    margin: 0 auto;
}

.lens {
    margin-left: 2px;
}

.grid-foot {
    display: flex;
    justify-content: flex-end;
    align-items: center;
    height: 30px;
    border: 1px solid #a8a8ac;
    border-top: 0;
}

.cargo-foot {
    padding-right: 3px;
}

.foot-liner {
    width: 118px;
    text-align: right;
}

.rotation-head {
    gap: 15px;
}

.rotation {
    height: 150px;
}

.rotation th {
    height: 20px;
}

.rotation td {
    height: 21px;
}

.rotation col:nth-child(1) { width: 22px; }
.rotation col:nth-child(2) { width: 55px; }
.rotation col:nth-child(3) { width: 229px; }
.rotation col:nth-child(4) { width: 788px; }
.rotation col:nth-child(5) { width: 127px; }
.rotation col:nth-child(6) { width: 127px; }

.rotation-foot {
    gap: 12px;
    padding-right: 14px;
}

.distance-bar {
    display: flex;
    align-items: center;
    gap: 14px;
    height: 31px;
    padding-left: 6px;
    font-weight: bold;
}

.pc-time {
    width: 62px;
    height: 23px;
    margin-left: auto;
    font-weight: normal;
    background: #cfcfd2;
}

select {
    width: 113px;
    height: 21px;
    margin-left: -12px;
    padding: 0 2px;
    appearance: none;
    border: 1px solid #b4b8c0;
    border-radius: 0;
    font-weight: normal;
    background: #fff conic-gradient(from -60deg at 50% 100%, #777 120deg, #fff 0) no-repeat right 6px center / 8px 4px;
}

/* bottom blocks */
.results {
    display: grid;
    grid-template-columns: 472fr 361fr 473fr;
    gap: 21px;
}

.block-head {
    display: flex;
    align-items: center;
    gap: 3px;
    height: 36px;
    padding-top: 6px;
}

.block-head h2 {
    width: 112px;
}

.block-head .push {
    width: 24px;
    height: 20px;
}

.block-head .push:nth-child(3) {
    width: 68px;
}

.block-head .push:nth-child(4) {
    flex: 1;
}

.sums {
    height: 123px;
}

.sums .lab {
    padding-left: 3px;
}

.sums .mid {
    padding: 0;
    text-align: center;
    line-height: 15px;
}

.opex col:nth-child(1) { width: 108px; }
.opex col:nth-child(2) { width: 126px; }
.opex col:nth-child(3) { width: 110px; }
.opex col:nth-child(4) { width: 127px; }

.bunker col:nth-child(1) { width: 94px; }
.bunker col:nth-child(2) { width: 27px; }
.bunker col:nth-child(3) { width: 105px; }
.bunker col:nth-child(4) { width: 27px; }
.bunker col:nth-child(5) { width: 107px; }

.hire col:nth-child(1) { width: 99px; }
.hire col:nth-child(2) { width: 137px; }

.totals col:nth-child(1) { width: 98px; }
.totals col:nth-child(2) { width: 138px; }

.lookup {
    display: flex;
    align-items: center;
    justify-content: space-between;
    height: 18px;
    padding-right: 1px;
}

.result-tables {
    display: flex;
    align-items: flex-start;
}

.hire-col,
.totals {
    flex: 1;
}

.hire {
    height: 82px;
}

.hire-tools {
    display: flex;
    gap: 3px;
    margin-top: 17px;
}

.hire-tools .push {
    width: 24px;
}

/* status bar */
.statusbar {
    display: grid;
    grid-template-columns: 35px 82px 40px 35px 38px 34px 173fr 342fr 297fr 262fr 22px;
    align-items: center;
    height: 24px;
    border-top: 2px solid #8e8e94;
    background: #e7e8ec;
}

.statusbar span {
    display: flex;
    align-items: center;
    justify-content: center;
    height: 20px;
    border-right: 1px solid #9e9ea4;
}

.statusbar span:last-child {
    border-right: 0;
}

.statusbar .off {
    color: #a4a4aa;
}

.led {
    width: 20px;
    height: 10px;
    border: 2px solid #0a8a0a;
    border-top-color: #6cf06c;
    background: #12d012;
}

.grip {
    width: 12px;
    height: 12px;
}

/* liner term popup */
.dialog {
    position: absolute;
    top: 300px;
    left: 261px;
    right: 177px;
    border: 2px dashed #f00;
    padding: 0 5px 1px 4px;
    background: #c8c9d1;
    box-shadow: 0 3px 0 #a9aab2;
    font-size: 14px;
}

.dialog-title {
    display: flex;
    align-items: center;
    gap: 6px;
    height: 37px;
    margin: 0 -5px 0 -4px;
    padding: 0 3px 2px 7px;
    background: linear-gradient(#dcdde2, #c8c9d1);
}

.dialog-title .app-icon {
    width: 21px;
    height: 21px;
}

.dialog-title h2 {
    flex: 1;
    font-family: "Noto Sans", sans-serif;
    font-size: 15px;
    color: #35222c;
}

.dialog-title button {
    width: 29px;
    height: 27px;
}

.dialog-body {
    padding: 7px 9px 5px 11px;
    border: 1px solid #b2b3bb;
    background: #eff0f2;
}

.dialog-body p {
    height: 66px;
    margin-left: -1px;
    font-size: 14px;
    line-height: 17px;
    border-bottom: 2px solid #b4b5b9;
    white-space: nowrap;
}

.dialog-body h3 {
    font-size: 22px;
    line-height: 28px;
    padding-top: 17px;
    font-weight: bold;
    color: #000;
    white-space: nowrap;
}

.mode {
    display: flex;
    align-items: center;
    height: 54px;
    padding: 5px 0 0 1px;
}

.mode label {
    display: flex;
    align-items: center;
    gap: 6px;
    margin-right: 31px;
    font-size: 15px;
    font-weight: bold;
}

.mode input[type="radio"] {
    width: 16px;
    height: 16px;
}

#lumpsum {
    width: 162px;
    height: 26px;
    margin-left: 29px;
    padding: 0 2px 3px;
    border: 1px solid #aab0bc;
    background: #fff;
    outline: 0;
    text-align: right;
}

#lumpsum::selection {
    background: #3399ff;
    color: #fff;
}

.charges {
    background: #efeff0;
}

.charges th {
    height: 25px;
}

.charges td {
    height: 24px;
}

.charges col:nth-child(1) { width: 99px; }
.charges col:nth-child(2) { width: 267px; }
.charges col:nth-child(n+3) { width: 133px; }

.dialog-actions {
    display: flex;
    justify-content: flex-end;
    gap: 11px;
    padding-top: 9px;
}

.dialog-actions .push {
    width: 101px;
    height: 29px;
}

/* guide overlay */
.guide {
    position: absolute;
    top: 0;
    left: 0;
    pointer-events: none;
}

.step {
    position: absolute;
    display: flex;
    align-items: center;
    justify-content: center;
    height: 48px;
    border: 1px solid #0a0a0a;
    background: #6e96c8;
    color: #000;
    font-family: "DejaVu Sans", sans-serif;
    font-size: 21px;
    white-space: nowrap;
}

.step b {
    position: absolute;
    top: -17px;
    left: -22px;
    width: 37px;
    height: 37px;
    border: 1px solid #111;
    border-radius: 50%;
    background: #7fa3d1;
    color: #fff;
    font-weight: normal;
    line-height: 34px;
    text-align: center;
}

.step-1 {
    top: 140px;
    left: 825px;
    width: 441px;
}

.step-2 {
    top: 289px;
    left: 556px;
    width: 485px;
}

.step-3 {
    top: 667px;
    left: 710px;
    width: 390px;
}
```
